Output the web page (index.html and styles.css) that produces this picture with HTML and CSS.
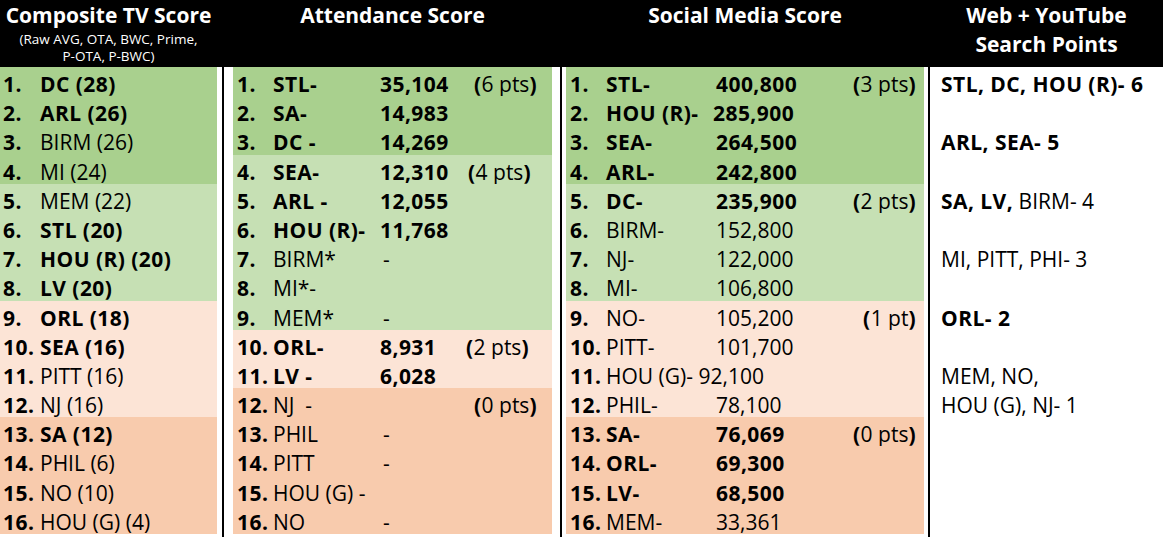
FILE: index.html
```html
<!DOCTYPE html>
<html>
<head>
<meta charset="utf-8">
<link rel="stylesheet" href="styles.css">
</head>
<body>
<div class="board">
  <div class="hcell">
    <div class="htitle">Composite TV Score</div>
    <div class="hsub">(Raw AVG, OTA, BWC, Prime,<br>P-OTA, P-BWC)</div>
  </div>
  <div class="hsep"></div>
  <div class="hcell"><div class="htitle">Attendance Score</div></div>
  <div class="hsep"></div>
  <div class="hcell"><div class="htitle">Social Media Score</div></div>
  <div class="hsep"></div>
  <div class="hcell"><div class="htitle">Web + YouTube<br>Search Points</div></div>

  <!-- Composite TV -->
  <div class="col">
    <div class="row tv g1"><b class="n">1.</b><b>DC (28)</b></div>
    <div class="row tv g1"><b class="n">2.</b><b>ARL (26)</b></div>
    <div class="row tv g1"><b class="n">3.</b><span>BIRM (26)</span></div>
    <div class="row tv g1"><b class="n">4.</b><span>MI (24)</span></div>
    <div class="row tv g2"><b class="n">5.</b><span>MEM (22)</span></div>
    <div class="row tv g2"><b class="n">6.</b><b>STL (20)</b></div>
    <div class="row tv g2"><b class="n">7.</b><b>HOU (R) (20)</b></div>
    <div class="row tv g2"><b class="n">8.</b><b>LV (20)</b></div>
    <div class="row tv p1"><b class="n">9.</b><b>ORL (18)</b></div>
    <div class="row tv p1"><b class="n">10.</b><b>SEA (16)</b></div>
    <div class="row tv p1"><b class="n">11.</b><span>PITT (16)</span></div>
    <div class="row tv p1"><b class="n">12.</b><span>NJ (16)</span></div>
    <div class="row tv p2"><b class="n">13.</b><b>SA (12)</b></div>
    <div class="row tv p2"><b class="n">14.</b><span>PHIL (6)</span></div>
    <div class="row tv p2"><b class="n">15.</b><span>NO (10)</span></div>
    <div class="row tv p2"><b class="n">16.</b><span>HOU (G) (4)</span></div>
  </div>
  <div class="sep s1"><i class="line"></i></div>

  <!-- Attendance -->
  <div class="col">
    <div class="row att g1"><b class="n">1.</b><b>STL-</b><b>35,104</b><span class="pts sh8"><b>(</b>6 pts<b>)</b></span></div>
    <div class="row att g1"><b class="n">2.</b><b>SA-</b><b>14,983</b></div>
    <div class="row att g1"><b class="n">3.</b><b>DC -</b><b>14,269</b></div>
    <div class="row att g2"><b class="n">4.</b><b>SEA-</b><b>12,310</b><span class="pts sh2"><b>(</b>4 pts<b>)</b></span></div>
    <div class="row att g2"><b class="n">5.</b><b>ARL -</b><b>12,055</b></div>
    <div class="row att g2"><b class="n">6.</b><b>HOU (R)-</b><b>11,768</b></div>
    <div class="row att g2"><b class="n">7.</b><span>BIRM*</span><span class="dash">-</span></div>
    <div class="row att g2"><b class="n">8.</b><span>MI*-</span></div>
    <div class="row att g2"><b class="n">9.</b><span>MEM*</span><span class="dash">-</span></div>
    <div class="row att p1"><b class="n">10.</b><b>ORL-</b><b>8,931</b><span class="pts"><b>(</b>2 pts<b>)</b></span></div>
    <div class="row att p1"><b class="n">11.</b><b>LV -</b><b>6,028</b></div>
    <div class="row att p2"><b class="n">12.</b><span>NJ&nbsp; -</span><span></span><span class="pts sh8"><b>(</b>0 pts<b>)</b></span></div>
    <div class="row att p2"><b class="n">13.</b><span>PHIL</span><span class="dash">-</span></div>
    <div class="row att p2"><b class="n">14.</b><span>PITT</span><span class="dash">-</span></div>
    <div class="row att p2"><b class="n">15.</b><span>HOU (G) -</span></div>
    <div class="row att p2"><b class="n">16.</b><span>NO</span><span class="dash">-</span></div>
  </div>
  <div class="sep s2"><i class="line"></i></div>

  <!-- Social media -->
  <div class="col">
    <div class="row soc g1"><b class="n">1.</b><b>STL-</b><b>400,800</b><span class="pts"><b>(</b>3 pts<b>)</b></span></div>
    <div class="row soc g1"><b class="n">2.</b><b>HOU (R)-</b><b class="pull">285,900</b></div>
    <div class="row soc g1"><b class="n">3.</b><b>SEA-</b><b>264,500</b></div>
    <div class="row soc g1"><b class="n">4.</b><b>ARL-</b><b>242,800</b></div>
    <div class="row soc g2"><b class="n">5.</b><b>DC-</b><b>235,900</b><span class="pts"><b>(</b>2 pts<b>)</b></span></div>
    <div class="row soc g2"><b class="n">6.</b><span>BIRM-</span><span>152,800</span></div>
    <div class="row soc g2"><b class="n">7.</b><span>NJ-</span><span>122,000</span></div>
    <div class="row soc g2"><b class="n">8.</b><span>MI-</span><span>106,800</span></div>
    <div class="row soc p1"><b class="n">9.</b><span>NO-</span><span>105,200</span><span class="pts"><b>(</b>1 pt<b>)</b></span></div>
    <div class="row soc p1"><b class="n">10.</b><span>PITT-</span><span>101,700</span></div>
    <div class="row soc p1"><b class="n">11.</b><span class="span2">HOU (G)- 92,100</span></div>
    <div class="row soc p1"><b class="n">12.</b><span>PHIL-</span><span>78,100</span></div>
    <div class="row soc p2"><b class="n">13.</b><b>SA-</b><b>76,069</b><span class="pts"><b>(</b>0 pts<b>)</b></span></div>
    <div class="row soc p2"><b class="n">14.</b><b>ORL-</b><b>69,300</b></div>
    <div class="row soc p2"><b class="n">15.</b><b>LV-</b><b>68,500</b></div>
    <div class="row soc p2"><b class="n">16.</b><span>MEM-</span><span>33,361</span></div>
  </div>
  <div class="sep s3"><i class="line"></i></div>

  <!-- Web + YouTube -->
  <div class="col web">
    <div class="row wr"><b>STL, DC, HOU (R)- 6</b></div>
    <div class="row wr"></div>
    <div class="row wr"><b>ARL, SEA- 5</b></div>
    <div class="row wr"></div>
    <div class="row wr"><span><b>SA, LV,</b> BIRM- 4</span></div>
    <div class="row wr"></div>
    <div class="row wr"><span>MI, PITT, PHI- 3</span></div>
    <div class="row wr"></div>
    <div class="row wr"><b>ORL- 2</b></div>
    <div class="row wr"></div>
    <div class="row wr"><span>MEM, NO,</span></div>
    <div class="row wr"><span>HOU (G), NJ- 1</span></div>
    <div class="row wr"></div>
    <div class="row wr"></div>
    <div class="row wr"></div>
    <div class="row wr"></div>
  </div>
</div>
</body>
</html>
```

FILE: styles.css
```css
* { box-sizing: border-box; }
html, body { margin: 0; padding: 0; background: #fff; }
body {
  width: 1163px;
  height: 537px;
  overflow: hidden;
  font-family: "Open Sans", "Noto Sans", "Liberation Sans", sans-serif;
  color: #000;
}
.board {
  display: grid;
  grid-template-columns: 217px 16px 319px 14px 358px 6px 233px;
  grid-template-rows: 67px 470px;
}
.hcell, .hsep { background: #000; }
.hcell {
  color: #fff;
  text-align: center;
  padding-top: 1px;
}
.htitle {
  font-weight: 700;
  font-size: 21px;
  line-height: 29px;
}
.hsub {
  font-size: 13.5px;
  line-height: 17px;
  margin-top: 1px;
}
.col {
  display: flex;
  flex-direction: column;
}
.sep {
  background: #fff;
  position: relative;
}
.sep .line {
  display: block;
  position: absolute;
  top: 0;
  bottom: 0;
  width: 2px;
  background: #000;
}
.s1 .line { left: 5px; }
.s2 .line { left: 8px; }
.s3 .line { left: 4px; }

.row {
  height: 29.19px;
  font-size: 21px;
  line-height: 24px;
  padding-top: 5px;
  white-space: nowrap;
  display: grid;
  align-items: start;
}
.row b { font-weight: 700; letter-spacing: 0.45px; }
.g1 { background: #a9d08e; }
.g2 { background: #c6e0b4; }
.p1 { background: #fce4d6; }
.p2 { background: #f8cbad; }

.tv { grid-template-columns: 37px auto; padding-left: 3px; justify-content: start; }
.att { grid-template-columns: 36px 107px 86px auto; padding-left: 4px; justify-content: start; }
.soc { grid-template-columns: 36px 110px 1fr auto; padding-left: 4px; padding-right: 8px; }
.web .wr { padding-left: 11px; display: block; }

.dash { padding-left: 3px; }
.sh8 { margin-left: 8px; }
.sh2 { margin-left: 2px; }
.pull { margin-left: -3px; }
.soc .pts { grid-column: 4; }
.span2 { grid-column: 2 / span 2; }
```
